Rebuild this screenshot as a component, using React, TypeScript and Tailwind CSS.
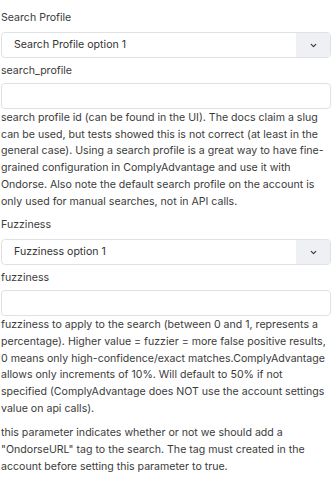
import { ChevronDown } from "lucide-react";

function SelectField({ label, option }: { label: string; option: string }) {
  return (
    <div className="flex flex-col">
      <div className="h-[17px] leading-[17px]">{label}</div>
      <div className="mt-[6px] flex h-[26px] overflow-hidden rounded-[4px] border border-[#dee2e6] bg-white">
        <div className="flex flex-1 items-center pl-[12px] text-[#333]">{option}</div>
        <div className="flex w-[34px] items-center justify-center bg-[#eef0f3]">
          <ChevronDown className="h-[9px] w-[9px] text-[#333]" strokeWidth={3} />
        </div>
      </div>
    </div>
  );
}

function TextField({ label, help }: { label: string; help: React.ReactNode }) {
  return (
    <div className="flex flex-col">
      <div className="mt-[4px] h-[17px] leading-[17px]">{label}</div>
      <input
        className="mt-[4px] h-[26px] w-full rounded-[4px] border border-[#dee2e6] bg-white outline-none"
        type="text"
      />
      <p className="mt-[1px] leading-[16.7px]">{help}</p>
    </div>
  );
}

export default function App() {
  return (
    <div
      className="min-h-[479px] bg-white pl-[1px] pr-[2px] pt-[9px] text-[10.6px] text-[#3b3b3b]"
      style={{ fontFamily: "Inter, 'Noto Sans', sans-serif" }}
    >
      <SelectField label="Search Profile" option="Search Profile option 1" />
      <TextField
        label="search_profile"
        help="search profile id (can be found in the UI). The docs claim a slug can be used, but tests showed this is not correct (at least in the general case). Using a search profile is a great way to have fine-grained configuration in ComplyAdvantage and use it with Ondorse. Also note the default search profile on the account is only used for manual searches, not in API calls."
      />
      <div className="mt-[6px]">
        <SelectField label="Fuzziness" option="Fuzziness option 1" />
      </div>
      <TextField
        label="fuzziness"
        help={
          <>
            fuzziness to apply to the search (between 0 and 1, represents a percentage). Higher value = fuzzier = more false
            positive results, 0 means only high-confidence/exact matches.ComplyAdvantage allows only increments of 10%. Will
            default to 50% if not <span className="whitespace-nowrap">specified (ComplyAdvantage</span> does NOT use the
            account settings value on api calls).
          </>
        }
      />
      <p className="mt-[8px] leading-[16.7px]">
        this parameter indicates whether or not we should add a "OndorseURL" tag to the search. The tag must created in the account before setting this parameter to true.
      </p>
      <label className="mt-[6px] flex items-center gap-[6px]">
        <input type="checkbox" className="h-[11px] w-[11px] rounded-[2px] border border-[#ccc]" />
        <span>Add Backlink As Tag</span>
      </label>
    </div>
  );
}
